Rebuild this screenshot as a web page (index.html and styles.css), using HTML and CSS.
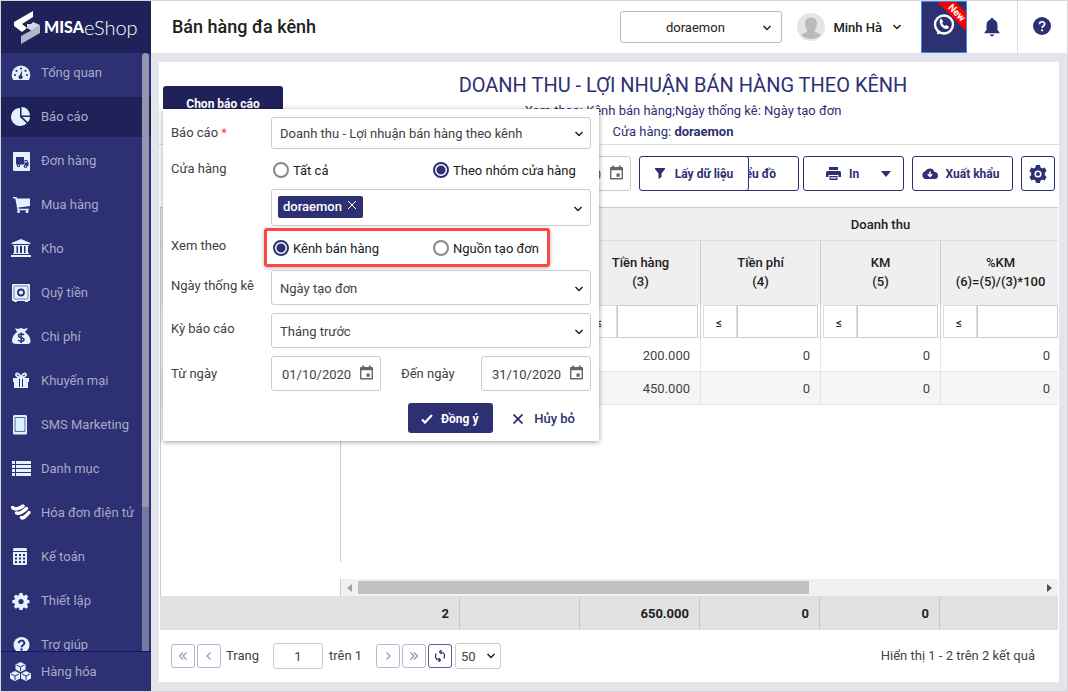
FILE: index.html
```html
<!DOCTYPE html>
<html lang="vi">

<head>
    <meta charset="UTF-8">
    <meta name="viewport" content="width=device-width, initial-scale=1.0">
    <title>MISA eShop - Bán hàng đa kênh</title>
    <link rel="stylesheet" href="styles.css">
</head>

<body>
    <aside class="sidebar">
        <a href="#" class="logo">
            <svg width="36" height="40" viewBox="0 0 36 40">
                <path fill="#fff" d="M25 4v6l-11 7 5 4-5 4-8-6v-4z" />
                <path fill="#d5d6e4" d="M19 17l4 0 2-2 7 3-8 6-5-3z" />
                <path fill="#b4b5cb" d="M32 18v8l-19 11v-8l11-6z" />
            </svg>
            <span class="logo-misa">MISA</span><span class="logo-eshop">eShop</span>
        </a>

        <nav class="menu">
            <a href="#" class="menu-item">
                <svg viewBox="0 0 20 20">
                    <path d="M10 2.500A9.300 9.300 0 0 0 .7 11.800c0 1.900.5 3.600 1.400 5.200h15.800a9.600 9.600 0 0 0 1.400-5.200A9.300 9.300 0 0 0 10 2.500z" />
                    <g class="cut">
                        <circle cx="4" cy="12" r="1.100" />
                        <circle cx="5.500" cy="7.800" r="1.100" />
                        <circle cx="10" cy="5.500" r="1.100" />
                        <circle cx="14.500" cy="7.800" r="1.100" />
                        <circle cx="16" cy="12" r="1.100" />
                        <path d="M11.200 7l-.4 5.500a2 2 0 1 1-2-.2z" />
                    </g>
                </svg>
                Tổng quan
            </a>
            <a href="#" class="menu-item active">
                <svg viewBox="0 0 20 20">
                    <path d="M9 1v9l6.500 6.300A9 9 0 1 1 9 1z" />
                    <path d="M10.500 0a8.500 8.500 0 0 1 8.500 8.500h-8.500z" />
                    <path d="M11.500 10h7.500a8 8 0 0 1-2.200 5.200z" />
                </svg>
                Báo cáo
            </a>
            <a href="#" class="menu-item">
                <svg viewBox="0 0 20 20">
                    <rect x="2" y="1" width="17" height="19" rx="1" />
                    <g class="cut">
                        <path d="M5 6h8v7.500H5zM13.500 9h2.500l1.500 2.300V15h-4z" />
                        <circle cx="7.500" cy="14.500" r="1.700" />
                        <circle cx="14.500" cy="15.300" r="1.700" />
                    </g>
                    <circle cx="7.500" cy="14.500" r=".7" />
                    <circle cx="14.500" cy="15.300" r=".7" />
                    <path d="M14.300 10h1.300l.8 1.500h-2.100z" />
                </svg>
                Đơn hàng
            </a>
            <a href="#" class="menu-item">
                <svg viewBox="0 0 20 20">
                    <path d="M2 2h3.500l.7 1.500H19v7.500l-11.500 1.500.3 1.300H18v1.500H6.500L4.300 3.500H2z" />
                    <circle cx="7.500" cy="16.500" r="1.500" />
                    <circle cx="16" cy="16.500" r="1.500" />
                </svg>
                Mua hàng
            </a>
            <a href="#" class="menu-item">
                <svg viewBox="0 0 20 20">
                    <path d="M10 0l9.500 4V5H.5V4zM2 6h16v1H2zM3 7h2.500v7H3zM7 7h2v7H7zM11 7h2v7h-2zM14.500 7H17v7h-2.500zM2 14h16v1H2zM0 16h20v2H0z" />
                </svg>
                Kho
            </a>
            <a href="#" class="menu-item">
                <svg viewBox="0 0 20 20">
                    <path d="M2 1h16a1 1 0 0 1 1 1v15a1 1 0 0 1-1 1h-1v1h-3v-1H6v1H3v-1H2a1 1 0 0 1-1-1V2a1 1 0 0 1 1-1z" />
                    <rect x="3" y="3" width="14" height="13" rx="1" fill="none" stroke="#2d3073" stroke-width=".6" />
                    <circle cx="10" cy="9.500" r="3" fill="none" stroke="#2d3073" stroke-width="1.800" />
                </svg>
                Quỹ tiền
            </a>
            <a href="#" class="menu-item">
                <svg viewBox="0 0 20 20">
                    <path d="M4 1l3 1 3-1 3 1 4-1-3 4c4 3 5.500 6 5.500 9 0 2-1 3-3 3h-11C2.500 17 1 16 1 14c0-4 2-7 5-9z" />
                    <path d="M13 8c-1-1.500-5.500-1.500-5.500.7 0 2.600 5.500 1.300 5.500 3.900 0 2.200-4.700 2.200-5.700.4M10.200 5.500v10.500" fill="none" stroke="#2d3073" stroke-width="1.500" />
                    <path d="M5.500 4.500L1 9M14.500 4.500l4.500 4.500" stroke="#2d3073" />
                </svg>
                Chi phí
            </a>
            <a href="#" class="menu-item">
                <svg viewBox="0 0 20 20">
                    <path d="M2 7h16v4H2zM3 11h14v6H3z" />
                    <path class="cut" d="M8 7.500h1V16H8zM11 7.500h1V16h-1z" />
                    <path d="M10 6.500C8 1.500 4.500 1.500 5 4c.3 1.500 3 2.500 5 2.500 2 0 4.700-1 5-2.500C15.500 1.500 12 1.500 10 6.500z" fill="none" stroke="#e3f2ff" stroke-width="1.800" />
                </svg>
                Khuyến mại
            </a>
            <a href="#" class="menu-item">
                <svg viewBox="0 0 20 20">
                    <rect x="2" y="0" width="14" height="19.500" rx="1.500" />
                    <path d="M4 2.500h10v14H4z" fill="#dcf1ff" stroke="#2d3073" stroke-width=".7" />
                </svg>
                SMS Marketing
            </a>
            <a href="#" class="menu-item">
                <svg viewBox="0 0 20 20">
                    <path d="M1 2h3v3H1zM5 2h15v3H5zM1 6h3v3H1zM5 6h15v3H5zM1 10h3v3H1zM5 10h15v3H5zM1 14h3v3H1zM5 14h15v3H5z" />
                </svg>
                Danh mục
            </a>
            <a href="#" class="menu-item">
                <svg viewBox="0 0 20 20">
                    <path d="M1.500 4.500Q5 8 12 3M5.500 10Q9 11.500 15.500 5.500M10.500 14.500Q12 16.500 18 9.500" fill="none" stroke="#fff" stroke-width="3.400" stroke-linecap="round" />
                </svg>
                Hóa đơn điện tử
            </a>
            <a href="#" class="menu-item">
                <svg viewBox="0 0 20 20">
                    <rect x="2" y="1" width="14" height="17" rx="1.500" />
                    <g class="cut">
                        <path d="M2 4h14v1H2zM4 7h2v2H4zM8 7h2v2H8zM12 7h2v2h-2zM4 10.500h2v2H4zM8 10.500h2v2H8zM12 10.500h2v2h-2zM4 14h2v2H4zM8 14h2v2H8zM12 14h2v2h-2z" />
                    </g>
                </svg>
                Kế toán
            </a>
            <a href="#" class="menu-item">
                <svg viewBox="0 0 20 20">
                    <path d="M8.500 2h3l.5 2.200 1.200.5 1.900-1.200 2.100 2.100L16 7.500l.5 1.200 2 .5v2.900l-2 .5-.5 1.200 1.200 1.900-2.100 2.100-1.900-1.200-1.200.5-.5 2h-3l-.5-2-1.200-.5-1.900 1.200-2.100-2.100L4 13.800l-.5-1.200-2.200-.5V9.200l2.200-.5L4 7.500 2.800 5.600l2.100-2.100 1.900 1.200L8 4.200z" />
                    <circle class="cut" cx="10" cy="10.500" r="2.600" />
                </svg>
                Thiết lập
            </a>
            <a href="#" class="menu-item">
                <svg viewBox="0 0 20 20">
                    <circle cx="10.500" cy="10" r="8" />
                    <path d="M7.800 8.200c0-3.400 5.600-3.400 5.600-.2 0 2.200-2.800 2-2.800 4.200" fill="none" stroke="#2d3073" stroke-width="2" />
                    <circle class="cut" cx="10.500" cy="14.500" r="1.200" />
                </svg>
                Trợ giúp
            </a>
            <span class="menu-scroll"></span>
        </nav>

        <a href="#" class="menu-item menu-bottom">
            <svg viewBox="0 0 22 20">
                <path d="M11 0l5 2.500v5L11 10 6 7.500v-5zM5.500 9l5 2.500v5L5.500 19l-5-2.500v-5zM16.500 9l5 2.500v5L16.500 19l-5-2.500v-5z" />
                <path d="M7 3l4 2 4-2M11 5v4M1.500 12l4 2 4-2M5.500 14v4M12.500 12l4 2 4-2M16.500 14v4" fill="none" stroke="#2d3073" stroke-width="1" />
            </svg>
            Hàng hóa
        </a>
    </aside>

    <div class="page">
        <header class="header">
            <h1>Bán hàng đa kênh</h1>

            <div class="select shop-select">
                <select aria-label="Cửa hàng">
                    <option>doraemon</option>
                </select>
                <svg class="chevron" viewBox="0 0 10 10"><path d="M1.500 3L5 6.500 8.500 3" /></svg>
            </div>

            <button type="button" class="user">
                <svg class="avatar" viewBox="0 0 28 28">
                    <circle cx="14" cy="14" r="14" fill="#e4e5e7" />
                    <path d="M14 4.500c3.800 0 6 2.500 6 6.500 0 2.500-1 5-2.500 6.300 0 2.200 3.500 2.500 6.300 4.700a14 14 0 0 1-19.600 0c2.800-2.200 6.300-2.500 6.300-4.700C9 16 8 13.500 8 11c0-4 2.200-6.500 6-6.500z" fill="#b9babc" />
                </svg>
                <span>Minh Hà</span>
                <svg class="chevron-inline" viewBox="0 0 10 10"><path d="M1.500 3L5 6.500 8.500 3" /></svg>
            </button>

            <button type="button" class="hotline" aria-label="Hotline">
                <svg width="24" height="24" viewBox="0 0 24 24">
                    <circle cx="12" cy="11.500" r="9" fill="none" stroke="#fff" stroke-width="2.400" />
                    <path d="M5.500 16l3.500 4-4 1.500z" fill="#fff" />
                    <path d="M8 6.500l1.500-.8 1.800 3-1.200 1.300c.7 1.500 1.700 2.400 3 3.100l1.300-1.100 2.600 1.700-.8 1.800c-4.500 2-10-4-8.200-9z" fill="#fff" />
                </svg>
                <span class="ribbon">New</span>
            </button>

            <button type="button" class="icon-button bell" aria-label="Thông báo">
                <svg width="18" height="20" viewBox="0 0 18 20">
                    <path d="M9 1c1 0 1.500.6 1.500 1.500C13 3.300 14.500 5.300 14.500 8v5l2 2.500v.8h-15v-.8l2-2.500V8c0-2.700 1.500-4.700 4-5.500C7.500 1.600 8 1 9 1zM7 17.500h4c0 1-1 1.800-2 1.800s-2-.8-2-1.800z" />
                </svg>
            </button>
            <button type="button" class="icon-button help" aria-label="Trợ giúp">
                <svg width="18" height="18" viewBox="0 0 18 18">
                    <circle cx="9" cy="9" r="9" />
                    <path d="M6.500 7.200C6.500 4 11.700 4 11.700 7c0 2-2.600 2-2.600 4" fill="none" stroke="#fff" stroke-width="1.700" />
                    <circle cx="9.100" cy="13.300" r="1.100" fill="#fff" />
                </svg>
            </button>
        </header>

        <main class="content">
            <section class="panel">
                <div class="report-head">
                    <button type="button" class="choose-report">Chọn báo cáo</button>
                    <div class="report-title">
                        <h2>DOANH THU - LỢI NHUẬN BÁN HÀNG THEO KÊNH</h2>
                        <p>Xem theo: Kênh bán hàng;Ngày thống kê: Ngày tạo đơn</p>
                        <p class="report-shop">Cửa hàng: <b>doraemon</b></p>
                    </div>
                </div>

                <div class="toolbar">
                    <div class="date-box">
                        <input type="text" value="31/10/2020" aria-label="Đến ngày">
                        <svg class="calendar" viewBox="0 0 14 15"><path fill-rule="evenodd" d="M2.500 0h2v1.500h5V0h2v1.500H13a1 1 0 0 1 1 1V14a1 1 0 0 1-1 1H1a1 1 0 0 1-1-1V2.500a1 1 0 0 1 1-1h1.500zM1.500 5v8.500h11V5zM7 8.500h3.500V12H7z" /></svg>
                    </div>
                    <button type="button" class="btn load">
                        <svg width="10" height="11" viewBox="0 0 10 11"><path d="M0 0h10v1L6.500 5.500V9l-3 2V5.500L0 1z" /></svg>
                        Lấy dữ liệu
                    </button>
                    <button type="button" class="btn chart">Biểu đồ</button>
                    <button type="button" class="btn print">
                        <svg width="15" height="14" viewBox="0 0 15 14"><path d="M3 0h9v3H3zM1.500 4h12A1.500 1.500 0 0 1 15 5.500V10h-2.500V8h-10v2H0V5.500A1.500 1.500 0 0 1 1.500 4zM3.500 9h8v4h-8zM4.500 10v.7h6V10zM4.500 11.500v.5h6v-.5z" fill-rule="evenodd" /></svg>
                        <span>In</span>
                        <svg width="10" height="6" viewBox="0 0 10 6"><path d="M0 0h10L5 6z" /></svg>
                    </button>
                    <button type="button" class="btn export">
                        <svg width="16" height="11" viewBox="0 0 16 11"><path d="M4 11a4 4 0 0 1-.8-7.800A5 5 0 0 1 12.500 4 3.500 3.500 0 0 1 12.500 11z" /><path d="M8 3.500v5M5.800 6.300L8 8.500l2.200-2.200" fill="none" stroke="#fff" stroke-width="1.500" /></svg>
                        Xuất khẩu
                    </button>
                    <button type="button" class="btn setting" aria-label="Thiết lập">
                        <svg width="18" height="18" viewBox="0 0 18 18">
                            <path d="M7 0h4l.6 2.500 1.500.9L15.600 2.600l2 3.400L15.800 7.800v2.400L17.600 12l-2 3.400-2.500-.8-1.500.9L11 18H7l-.6-2.500-1.500-.9-2.500.8-2-3.400 1.800-1.800V7.800L.4 6l2-3.400 2.500.8 1.500-.9z" />
                            <circle cx="9" cy="9" r="2.800" fill="none" stroke="#fff" stroke-width="1.600" />
                        </svg>
                    </button>
                </div>

                <div class="grid">
                    <table class="data">
                        <colgroup>
                            <col class="col-channel"><col><col><col><col><col><col><col>
                        </colgroup>
                        <thead>
                            <tr class="group-row">
                                <th></th>
                                <th colspan="2"></th>
                                <th colspan="5">Doanh thu</th>
                            </tr>
                            <tr class="name-row">
                                <th></th>
                                <th></th>
                                <th></th>
                                <th>Tiền hàng<br>(3)</th>
                                <th>Tiền phí<br>(4)</th>
                                <th>KM<br>(5)</th>
                                <th>%KM<br>(6)=(5)/(3)*100</th>
                                <th></th>
                            </tr>
                            <tr class="filter-row">
                                <td></td>
                                <td></td>
                                <td></td>
                                <td><div class="filter"><button type="button">≤</button><input type="text" aria-label="Tiền hàng"></div></td>
                                <td><div class="filter"><button type="button">≤</button><input type="text" aria-label="Tiền phí"></div></td>
                                <td><div class="filter"><button type="button">≤</button><input type="text" aria-label="KM"></div></td>
                                <td><div class="filter"><button type="button">≤</button><input type="text" aria-label="%KM"></div></td>
                                <td></td>
                            </tr>
                        </thead>
                        <tbody>
                            <tr>
                                <td></td>
                                <td></td>
                                <td></td>
                                <td>200.000</td>
                                <td>0</td>
                                <td>0</td>
                                <td>0</td>
                                <td></td>
                            </tr>
                            <tr>
                                <td></td>
                                <td></td>
                                <td></td>
                                <td>450.000</td>
                                <td>0</td>
                                <td>0</td>
                                <td>0</td>
                                <td></td>
                            </tr>
                        </tbody>
                    </table>
                    <div class="frozen-line"></div>
                    <div class="hscroll">
                        <svg width="5" height="8" viewBox="0 0 5 8"><path d="M5 0v8L0 4z" fill="#a3a3a3" /></svg>
                        <span class="track"><span class="thumb"></span></span>
                        <svg width="5" height="8" viewBox="0 0 5 8"><path d="M0 0v8l5-4z" fill="#505050" /></svg>
                    </div>
                </div>

                <div class="totals">
                    <table>
                        <colgroup>
                            <col class="col-total"><col><col><col><col><col>
                        </colgroup>
                        <tr>
                            <td>2</td>
                            <td></td>
                            <td>650.000</td>
                            <td>0</td>
                            <td>0</td>
                            <td></td>
                        </tr>
                    </table>
                </div>

                <div class="pager">
                    <button type="button" disabled aria-label="Trang đầu"><svg viewBox="0 0 10 10"><path d="M5 1.500L1.500 5 5 8.500M8.500 1.500L5 5l3.500 3.500" /></svg></button>
                    <button type="button" disabled aria-label="Trang trước"><svg viewBox="0 0 10 10"><path d="M6.500 1.500L3 5l3.500 3.500" /></svg></button>
                    <label for="page-no">Trang</label>
                    <input type="text" id="page-no" value="1">
                    <span class="page-total">trên 1</span>
                    <button type="button" disabled aria-label="Trang sau"><svg viewBox="0 0 10 10"><path d="M3.500 1.500L7 5 3.500 8.500" /></svg></button>
                    <button type="button" disabled aria-label="Trang cuối"><svg viewBox="0 0 10 10"><path d="M1.500 1.500L5 5 1.500 8.500M5 1.500L8.500 5 5 8.500" /></svg></button>
                    <button type="button" class="refresh" aria-label="Tải lại"><svg viewBox="0 0 12 12"><path d="M6.500 2C9 2 10.500 3.800 10.500 6c0 1-.3 1.700-.8 2.400M5.500 10C3 10 1.500 8.200 1.500 6c0-1 .3-1.700.8-2.400M7.500 0l-2 2 2 2M4.500 8l2 2-2 2" /></svg></button>
                    <div class="select size-select">
                        <select aria-label="Số dòng">
                            <option>50</option>
                        </select>
                        <svg class="chevron" viewBox="0 0 10 10"><path d="M1.500 3L5 6.500 8.500 3" /></svg>
                    </div>
                    <span class="result">Hiển thị 1 - 2 trên 2 kết quả</span>
                </div>

                <!-- report parameters -->
                <form class="popup">
                    <div class="row row-report">
                        <label for="report">Báo cáo <span class="required">*</span></label>
                        <div class="select">
                            <select id="report">
                                <option>Doanh thu - Lợi nhuận bán hàng theo kênh</option>
                            </select>
                            <svg class="chevron" viewBox="0 0 10 10"><path d="M1.500 3L5 6.500 8.500 3" /></svg>
                        </div>
                    </div>
                    <div class="row row-shop" role="radiogroup" aria-labelledby="lb-shop">
                        <span class="label" id="lb-shop">Cửa hàng</span>
                        <div class="radios">
                            <label><input type="radio" name="shop">Tất cả</label>
                            <label><input type="radio" name="shop" checked>Theo nhóm cửa hàng</label>
                        </div>
                    </div>
                    <div class="row">
                        <span class="label"></span>
                        <div class="tag-box">
                            <span class="tag">doraemon
                                <button type="button" aria-label="Xóa"><svg width="8" height="8" viewBox="0 0 8 8"><path d="M0 0l8 8M8 0L0 8" stroke="#fff" /></svg></button>
                            </span>
                            <svg class="chevron" viewBox="0 0 10 10"><path d="M1.500 3L5 6.500 8.500 3" /></svg>
                        </div>
                    </div>
                    <div class="row row-view" role="radiogroup" aria-labelledby="lb-view">
                        <span class="label" id="lb-view">Xem theo</span>
                        <div class="radios highlight">
                            <label><input type="radio" name="view" checked>Kênh bán hàng</label>
                            <label><input type="radio" name="view">Nguồn tạo đơn</label>
                        </div>
                    </div>
                    <div class="row row-field">
                        <label for="stat-date">Ngày thống kê</label>
                        <div class="select">
                            <select id="stat-date">
                                <option>Ngày tạo đơn</option>
                            </select>
                            <svg class="chevron" viewBox="0 0 10 10"><path d="M1.500 3L5 6.500 8.500 3" /></svg>
                        </div>
                    </div>
                    <div class="row row-field">
                        <label for="period">Kỳ báo cáo</label>
                        <div class="select">
                            <select id="period">
                                <option>Tháng trước</option>
                            </select>
                            <svg class="chevron" viewBox="0 0 10 10"><path d="M1.500 3L5 6.500 8.500 3" /></svg>
                        </div>
                    </div>
                    <div class="row row-field row-dates">
                        <label for="from">Từ ngày</label>
                        <div class="dates">
                            <div class="date-box">
                                <input type="text" id="from" value="01/10/2020">
                                <svg class="calendar" viewBox="0 0 14 15"><path fill-rule="evenodd" d="M2.500 0h2v1.500h5V0h2v1.500H13a1 1 0 0 1 1 1V14a1 1 0 0 1-1 1H1a1 1 0 0 1-1-1V2.500a1 1 0 0 1 1-1h1.500zM1.500 5v8.500h11V5zM7 8.500h3.500V12H7z" /></svg>
                            </div>
                            <label for="to">Đến ngày</label>
                            <div class="date-box">
                                <input type="text" id="to" value="31/10/2020">
                                <svg class="calendar" viewBox="0 0 14 15"><path fill-rule="evenodd" d="M2.500 0h2v1.500h5V0h2v1.500H13a1 1 0 0 1 1 1V14a1 1 0 0 1-1 1H1a1 1 0 0 1-1-1V2.500a1 1 0 0 1 1-1h1.500zM1.500 5v8.500h11V5zM7 8.500h3.500V12H7z" /></svg>
                            </div>
                        </div>
                    </div>
                    <div class="actions">
                        <button type="submit" class="ok">
                            <svg width="12" height="10" viewBox="0 0 12 10"><path d="M1 5.500L4 8.500 11 1" fill="none" stroke="#fff" stroke-width="2.200" /></svg>
                            Đồng ý
                        </button>
                        <button type="button" class="cancel">
                            <svg width="10" height="10" viewBox="0 0 10 10"><path d="M.5.5l9 9M9.500.5l-9 9" stroke="#2d3073" stroke-width="1.800" /></svg>
                            Hủy bỏ
                        </button>
                    </div>
                </form>
            </section>
        </main>
    </div>
</body>

</html>
```
FILE: styles.css
```css
* {
    box-sizing: border-box;
}

body {
    margin: 0;
    display: flex;
    height: 100vh;
    border: 1px solid #d5d6da;
    font-family: Roboto, "Liberation Sans", sans-serif;
    font-size: 13px;
    line-height: 20px;
    color: #212121;
    background: #e4e5eb;
}

button,
input,
select {
    font: inherit;
    color: inherit;
    margin: 0;
}

button {
    padding: 0;
    border: 0;
    background: none;
    white-space: nowrap;
}

h1,
h2,
p {
    margin: 0;
}

a {
    text-decoration: none;
}

svg {
    display: block;
    flex: none;
}

/* sidebar */
.sidebar {
    flex: none;
    width: 150px;
    display: flex;
    flex-direction: column;
    background: #2d3073;
}

.logo {
    flex: none;
    display: flex;
    align-items: center;
    height: 52px;
    padding-left: 7px;
    color: #fff;
    background: #1f2258;
    font-family: Lato, sans-serif;
}

.logo-misa {
    font-size: 16px;
    font-weight: 900;
}

.logo-eshop {
    font-size: 20px;
    font-weight: 300;
}

.menu {
    position: relative;
    flex: 1;
    min-height: 0;
    overflow: hidden;
}

.menu-item {
    display: flex;
    align-items: center;
    gap: 10px;
    height: 40px;
    margin-bottom: 4px;
    padding-left: 10px;
    color: #a8aac8;
    white-space: nowrap;
}

.menu-item svg {
    width: 20px;
    height: 20px;
    fill: #e3f2ff;
}

.menu-item .cut {
    fill: #2d3073;
}

.menu-item.active {
    background: #1f2258;
}

.menu-bottom {
    flex: none;
    gap: 9px;
    margin: 0;
    padding-left: 8px;
    border-top: 1px solid #14146b;
}

.menu-bottom svg {
    width: 23px;
}

.menu-scroll {
    position: absolute;
    top: 0;
    right: 2px;
    bottom: 0;
    width: 7px;
    border-radius: 4px 4px 0 0;
    background: linear-gradient(#9596ae 76%, #7678a2 76%);
}

/* header */
.page {
    flex: 1;
    min-width: 0;
    display: flex;
    flex-direction: column;
}

.header {
    flex: none;
    display: flex;
    align-items: center;
    height: 52px;
    padding-left: 21px;
    background: #fff;
}

.header h1 {
    margin-right: auto;
    font-size: 18px;
    font-weight: 500;
    line-height: 24px;
}

.select {
    position: relative;
    flex: 1;
    min-width: 0;
}

.select select {
    appearance: none;
    display: block;
    width: 100%;
    height: 100%;
    padding: 2px 8px 0;
    border: 1px solid #ccc;
    border-radius: 3px;
    background: #fff;
}

.chevron {
    position: absolute;
    top: calc(50% - 4px);
    right: 7px;
    width: 10px;
    height: 10px;
}

.chevron,
.chevron-inline {
    fill: none;
    stroke: #212121;
    stroke-width: 1.5;
}

.chevron-inline {
    width: 10px;
    height: 10px;
}

.shop-select {
    flex: none;
    width: 162px;
    height: 32px;
    margin-right: 15px;
}

.shop-select select {
    padding: 2px 20px 0 8px;
    border-color: #bbb;
    text-align: center;
    text-align-last: center;
}

.shop-select .chevron {
    right: 10px;
}

.user {
    display: flex;
    align-items: center;
    font-weight: 500;
}

.user span {
    margin: 0 10px 0 8px;
    padding-top: 2px;
}

.avatar {
    width: 28px;
    height: 28px;
}

.hotline {
    position: relative;
    width: 46px;
    height: 52px;
    margin-left: 19px;
    padding: 0 0 4px 10px;
    border: 1px solid #3c8dd0;
    background: #2d3073;
    overflow: hidden;
}

.ribbon {
    position: absolute;
    top: 4px;
    right: -26px;
    width: 70px;
    color: #fff;
    background: #f00;
    font-size: 10px;
    font-weight: 700;
    line-height: 13px;
    transform: rotate(45deg);
}

.icon-button {
    display: flex;
    align-items: center;
    justify-content: center;
    width: 50px;
    height: 52px;
    fill: #2d3073;
}

.bell {
    width: 51px;
    border-right: 1px solid #dcdde2;
}

.help {
    width: 49px;
    padding: 0 2px 2px 0;
}

/* content */
.content {
    flex: 1;
    min-height: 0;
    display: flex;
    padding: 9px 8px;
}

.panel {
    position: relative;
    flex: 1;
    min-width: 0;
    display: flex;
    flex-direction: column;
    background: #fff;
}

.report-head {
    flex: none;
    display: flex;
    height: 83px;
    padding-left: 4px;
    border-bottom: 1px solid #dcdcdc;
}

.choose-report {
    flex: none;
    width: 120px;
    height: 35px;
    margin-top: 24px;
    border-radius: 3px;
    color: #fff;
    background: #1f2258;
    font-size: 12px;
    font-weight: 700;
}

.report-title {
    flex: 1;
    padding: 8px 0 0 24px;
    color: #2d3073;
    text-align: center;
}

.report-title h2 {
    font-size: 20px;
    font-weight: 400;
    line-height: 30px;
}

.report-title p {
    line-height: 21px;
}

.report-title .report-shop {
    padding-right: 20px;
}

.report-title b {
    font-weight: 700;
}

/* toolbar */
.toolbar {
    flex: none;
    display: flex;
    justify-content: flex-end;
    align-items: center;
    gap: 8px;
    height: 62px;
    padding: 0 4px 5px 0;
}

.date-box {
    position: relative;
    flex: none;
    width: 110px;
    height: 35px;
    color: #424242;
}

.date-box input {
    width: 100%;
    height: 100%;
    padding: 2px 10px 0;
    border: 1px solid #ccc;
    border-radius: 3px;
    background: #fff;
}

.calendar {
    position: absolute;
    top: 9px;
    right: 8px;
    width: 13px;
    height: 15px;
    fill: #666;
}

.btn {
    display: flex;
    align-items: center;
    justify-content: center;
    gap: 10px;
    width: 101px;
    height: 35px;
    border: 1px solid #2d3073;
    border-radius: 3px;
    color: #2d3073;
    background: #fff;
    fill: #2d3073;
    font-size: 12px;
    font-weight: 700;
}

.load {
    position: relative;
    z-index: 1;
    width: 110px;
}

.chart {
    justify-content: flex-end;
    margin: 0 -4px 0 -59px;
    padding-right: 22px;
}

.print {
    padding-left: 10px;
}

.print span {
    margin: 0 12px 0 -2px;
}

.export {
    gap: 8px;
    padding-right: 4px;
}

.setting {
    width: 34px;
}

/* table */
.grid {
    flex: 1;
    min-height: 0;
    display: flex;
    flex-direction: column;
    margin: 0 1px;
    border: solid #ccc;
    border-width: 1px 0 0 1px;
    overflow: hidden;
}

table {
    table-layout: fixed;
    border-collapse: separate;
    border-spacing: 0;
}

.data {
    flex: none;
    width: 1020px;
}

.col-channel {
    width: 180px;
}

.data th {
    padding: 0;
    border-bottom: 0;
    border-right: 1px solid #ccc;
    background: #efefef;
    font-weight: 500;
    line-height: 19px;
}

.data .group-row th {
    height: 33px;
    border-bottom: 1px solid #dcdcdc;
}

.data .name-row th {
    height: 64px;
    padding-bottom: 2px;
}

.data td {
    height: 33px;
    padding: 2px 10px 0;
    border: solid #e5e5e5;
    border-width: 0 1px 1px 0;
    color: #424242;
    text-align: right;
}

.data .filter-row td {
    height: 34px;
    padding: 0 2px;
    border-color: #ccc;
    border-bottom: 0;
}

.data tbody tr:nth-child(even) {
    background: #f5f5f5;
}

.filter {
    display: flex;
    height: 33px;
    margin-bottom: 1px;
}

.filter button {
    flex: none;
    width: 34px;
    padding: 2px 2px 0 0;
    border: 1px solid #dcdcdc;
    color: #212121;
    font-size: 12px;
}

.filter input {
    flex: 1;
    min-width: 0;
    padding: 0 4px;
    border: 1px solid #ccc;
}

.frozen-line {
    flex: 1;
    width: 180px;
    margin-bottom: 17px;
    border-right: 1px solid #ccc;
}

.hscroll {
    flex: none;
    display: flex;
    align-items: center;
    gap: 6px;
    height: 17px;
    margin-left: 179px;
    padding: 0 6px;
    border-left: 1px solid #ccc;
    background: #f1f1f1;
}

.track {
    flex: 1;
    height: 13px;
}

.thumb {
    display: block;
    width: 66%;
    height: 100%;
    background: #c1c1c1;
}

.totals {
    flex: none;
    margin: 0 1px;
    overflow: hidden;
    background: #e1e1e1;
}

.totals table {
    width: 900px;
}

.col-total {
    width: 300px;
}

.totals td {
    height: 34px;
    padding: 2px 10px 0;
    border-right: 1px solid #c8c8c8;
    font-weight: 700;
    text-align: right;
}

.totals td:last-child {
    border-right: 0;
}

/* pager */
.pager {
    flex: none;
    display: flex;
    align-items: center;
    height: 52px;
    padding: 0 24px 0 12px;
    color: #424242;
}

.pager button {
    display: flex;
    align-items: center;
    justify-content: center;
    width: 24px;
    height: 24px;
    margin-right: 2px;
    border: 1px solid #b5b6d2;
    border-radius: 3px;
}

.pager button svg {
    width: 10px;
    height: 10px;
    fill: none;
    stroke: #9293bd;
    stroke-width: 1.2;
}

.pager .refresh {
    border-color: #5c5e97;
}

.pager .refresh svg {
    width: 12px;
    height: 12px;
    stroke: #2d3073;
}

.pager label {
    width: 47px;
    margin-left: 3px;
}

.pager input {
    width: 50px;
    height: 26px;
    border: 1px solid #ccc;
    border-radius: 3px;
    text-align: center;
}

.page-total {
    width: 47px;
    margin-left: 6px;
}

.size-select {
    flex: none;
    width: 46px;
    height: 26px;
    margin-left: 1px;
}

.size-select select {
    padding: 2px 5px 0;
}

.size-select .chevron {
    top: 8px;
    right: 5px;
}

.result {
    margin-left: auto;
}

/* popup */
.popup {
    position: absolute;
    top: 47px;
    left: 4px;
    z-index: 2;
    width: 436px;
    padding: 8px;
    background: #fff;
    color: #424242;
    box-shadow: 0 1px 5px rgba(0, 0, 0, .4);
}

.row {
    display: flex;
}

.row > label,
.row > .label {
    flex: none;
    width: 100px;
    padding-top: 6px;
}

.required {
    color: #f44336;
}

.row-report {
    height: 32px;
}

.row-shop {
    height: 40px;
}

.row-shop > .label,
.row-view > .label {
    padding-top: 10px;
}

.row-view {
    height: 44px;
}

.row-field {
    height: 35px;
    margin-bottom: 8px;
}

.row-dates label,
.row-dates > label {
    padding-top: 8px;
}

.radios {
    position: relative;
    flex: 1;
    display: grid;
    grid-template-columns: 1fr 1fr;
    align-items: center;
}

.radios label {
    display: flex;
    align-items: center;
    gap: 4px;
    padding: 4px 0 0 2px;
    color: #212121;
}

.radios input {
    appearance: none;
    width: 16px;
    height: 16px;
    margin-bottom: 3px;
    border: 2px solid #888;
    border-radius: 50%;
}

.radios input:checked {
    border-color: #2d3073;
    background: radial-gradient(circle, #2d3073 4px, #fff 5px);
}

.highlight label {
    padding-top: 2px;
}

.highlight::after {
    content: "";
    position: absolute;
    inset: 2px 41px 3px -7px;
    border: 3px solid #fb4747;
    border-radius: 3px;
    box-shadow: 0 1px 4px rgba(0, 0, 0, .3);
    pointer-events: none;
}

.tag-box {
    position: relative;
    flex: 1;
    display: flex;
    align-items: center;
    height: 37px;
    padding: 0 6px 2px;
    border: 1px solid #ccc;
    border-radius: 3px;
}

.tag {
    display: flex;
    align-items: center;
    gap: 6px;
    height: 22px;
    padding: 0 7px 0 5px;
    border-radius: 2px;
    color: #fff;
    background: #2d3073;
    font-weight: 500;
}

.tag button {
    padding-bottom: 3px;
}

.dates {
    flex: 1;
    display: flex;
    justify-content: space-between;
}

.dates label {
    width: 60px;
}

.actions {
    display: flex;
    justify-content: flex-end;
    gap: 20px;
    margin-top: 12px;
    padding-right: 16px;
}

.actions button {
    display: flex;
    align-items: center;
    gap: 11px;
    height: 30px;
    padding-top: 2px;
    color: #2d3073;
    font-weight: 500;
}

.actions .ok {
    gap: 8px;
    justify-content: center;
    width: 85px;
    padding-right: 2px;
    border-radius: 3px;
    color: #fff;
    background: #2d3073;
    font-size: 12px;
    font-weight: 700;
}
```
